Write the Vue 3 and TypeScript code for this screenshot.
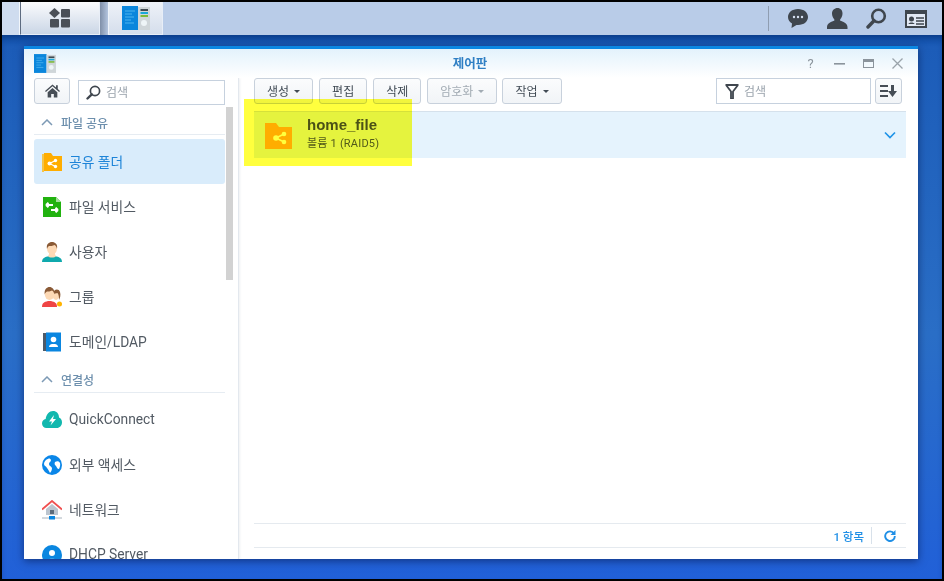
<script setup lang="ts">
interface Item { label: string; icon: string; active?: boolean }
const share: Item[] = [
  { label: '공유 폴더', icon: 'folder', active: true },
  { label: '파일 서비스', icon: 'file' },
  { label: '사용자', icon: 'user' },
  { label: '그룹', icon: 'group' },
  { label: '도메인/LDAP', icon: 'domain' },
]
const conn: Item[] = [
  { label: 'QuickConnect', icon: 'cloud' },
  { label: '외부 액세스', icon: 'globe' },
  { label: '네트워크', icon: 'home' },
  { label: 'DHCP Server', icon: 'dhcp' },
]
const tools = [
  { label: '생성', caret: true },
  { label: '편집' },
  { label: '삭제' },
  { label: '암호화', caret: true, disabled: true },
  { label: '작업', caret: true },
]
</script>

<template>
  <div class="screen">
    <header class="taskbar">
      <div class="tb-first"></div>
      <button class="tb-btn tb-main">
        <svg width="22" height="20" viewBox="0 0 22 20">
          <path d="M5.500 0L11 5 5.500 10 0 5z" fill="#4a4f57" />
          <rect x="12" y="1" width="9" height="8.5" rx="1" fill="#4a4f57" />
          <rect x="1" y="11" width="9" height="8.5" rx="1" fill="#4a4f57" />
          <rect x="12" y="11" width="9" height="8.5" rx="1" fill="#4a4f57" />
        </svg>
      </button>
      <div class="tb-gap"></div>
      <button class="tb-btn tb-app">
        <svg width="28" height="24" viewBox="0 0 28 24">
          <rect x="0" y="0" width="16" height="24" fill="#0a86dc" />
          <path d="M3 5h10M3 8h7M3 11h9M3 14h6M3 17h9" stroke="#4db4ee" stroke-width="1" />
          <rect x="16" y="1" width="12" height="23" fill="#cfd6d9" />
          <rect x="18.500" y="3" width="7.500" height="2" fill="#3f4a52" />
          <rect x="18.500" y="6" width="7.500" height="2" fill="#19a7d8" />
          <rect x="18.500" y="9" width="7.500" height="2" fill="#7dba3a" />
          <circle cx="22" cy="17" r="3" fill="#eef5f7" />
        </svg>
      </button>
      <div class="tb-spacer"></div>
      <div class="tb-sep"></div>
      <div class="tb-icons">
        <svg class="ic-chat" width="22" height="21" viewBox="0 0 22 21">
          <path d="M11 1C5 1 1 4.600 1 9c0 2.800 1.500 5 4 6.500L4.500 20l5-3.100c.5.100 1 .1 1.500.1 6 0 10-3.600 10-8S17 1 11 1z" fill="#3f464e" />
          <circle cx="7" cy="9" r="1.200" fill="#d7e2f2" /><circle cx="11" cy="9" r="1.200" fill="#d7e2f2" /><circle cx="15" cy="9" r="1.200" fill="#d7e2f2" />
        </svg>
        <svg class="ic-user" width="21" height="21" viewBox="0 0 21 21">
          <path d="M10.500 0c3 0 5 2.300 5 5.500 0 2.500-1 4.500-2.300 5.700v1.500c2.500.8 7.300 2.400 7.300 6.300v2H0v-2c0-3.900 4.800-5.500 7.300-6.300v-1.500C6 10 5 8 5 5.500 5 2.300 7.500 0 10.500 0z" fill="#3f464e" />
        </svg>
        <svg class="ic-search" width="21" height="21" viewBox="0 0 21 21">
          <circle cx="12.500" cy="8" r="6.300" fill="none" stroke="#3f464e" stroke-width="2.600" />
          <path d="M8 12.800L2 19" stroke="#3f464e" stroke-width="3.400" stroke-linecap="round" />
        </svg>
        <svg class="ic-card" width="22" height="18" viewBox="0 0 22 18">
          <rect x="1" y="1" width="20" height="16" fill="#e2e9f4" stroke="#3f464e" stroke-width="2" />
          <rect x="1" y="1" width="20" height="3" fill="#3f464e" />
          <circle cx="6.500" cy="9" r="2.500" fill="#3f464e" />
          <path d="M3.500 14c.3-2 5.700-2 6 0z" fill="#3f464e" />
          <path d="M11 8h8M11 11h8M11 14h8" stroke="#3f464e" stroke-width="1.400" />
        </svg>
      </div>
    </header>

    <main class="desktop">
      <section class="window">
        <div class="win-head">
          <svg class="win-icon" width="22" height="19" viewBox="0 0 28 24">
            <rect x="0" y="0" width="16" height="24" fill="#0a86dc" />
            <path d="M3 5h10M3 8h7M3 11h9M3 14h6M3 17h9" stroke="#4db4ee" stroke-width="1" />
            <rect x="16" y="1" width="12" height="23" fill="#cfd6d9" />
            <rect x="18.500" y="3" width="7.500" height="2" fill="#3f4a52" />
            <rect x="18.500" y="6" width="7.500" height="2" fill="#19a7d8" />
            <rect x="18.500" y="9" width="7.500" height="2" fill="#7dba3a" />
            <circle cx="22" cy="17" r="3" fill="#eef5f7" />
          </svg>
          <span class="win-title">제어판</span>
          <div class="win-ctrl">
            <span class="help">?</span>
            <svg width="11" height="11" viewBox="0 0 11 11"><rect y="5" width="11" height="1.600" fill="#8b949c" /></svg>
            <svg width="11" height="11" viewBox="0 0 11 11"><rect x="0.500" y="1.500" width="10" height="8" fill="none" stroke="#8b949c" /><rect x="0.500" y="1" width="10" height="3" fill="#8b949c" /></svg>
            <svg width="11" height="11" viewBox="0 0 11 11"><path d="M.5.500l10 10M10.500.500l-10 10" stroke="#9aa3aa" stroke-width="1.300" /></svg>
          </div>
        </div>

        <div class="win-body">
          <aside class="side">
            <div class="side-top">
              <button class="btn home-btn">
                <svg width="15" height="14" viewBox="0 0 17 15">
                  <path d="M8.500 0L0 7.500l1 1.100 7.500-6.500 7.500 6.500 1-1.100-2.500-2.200V1h-2v2.500z" fill="#474e56" />
                  <path d="M3 9l5.500-4.800L14 9v6h-4v-4H7v4H3z" fill="#474e56" />
                </svg>
              </button>
              <div class="input side-search">
                <svg width="15" height="15" viewBox="0 0 15 15">
                  <circle cx="9" cy="6" r="4.600" fill="none" stroke="#3f464e" stroke-width="1.700" />
                  <path d="M5.800 9.300L1.500 13.500" stroke="#3f464e" stroke-width="2.400" stroke-linecap="round" />
                </svg>
                <span>검색</span>
              </div>
            </div>

            <div class="side-scroll">
              <div class="side-list">
                <template v-for="(group, gi) in [share, conn]" :key="gi">
                  <div class="sec" :class="{ second: gi === 1 }">
                    <svg width="12" height="7" viewBox="0 0 12 7"><path d="M1 6l5-5 5 5" fill="none" stroke="#7d9ab5" stroke-width="1.500" /></svg>
                    <span>{{ gi === 0 ? '파일 공유' : '연결성' }}</span>
                  </div>
                  <div v-for="it in group" :key="it.label" class="item" :class="{ active: it.active }">
                    <svg class="item-ic" width="20" height="20" viewBox="0 0 20 20">
                      <template v-if="it.icon === 'folder'">
                        <path d="M0 2h2v18H0z" fill="#ffb300" opacity=".7" />
                        <path d="M2 1h7l2 3h9v15H2z" fill="#ffad00" />
                        <g stroke="#fff" stroke-width="1.200"><path d="M7.500 11.500l6-3M7.500 11.500l6 3" /></g>
                        <circle cx="7.500" cy="11.500" r="2" fill="#fff" /><circle cx="13.500" cy="8.500" r="1.700" fill="#fff" /><circle cx="13.500" cy="14.500" r="1.700" fill="#fff" />
                      </template>
                      <template v-else-if="it.icon === 'file'">
                        <path d="M1 0h13l5 5v15H1z" fill="#21b20f" />
                        <path d="M14 0l5 5h-5z" fill="#a3e09a" />
                        <path d="M4 8h7M4 8l2.500-2.200M4 8l2.500 2.200M16 13h-7M16 13l-2.500-2.200M16 13l-2.500 2.200" stroke="#fff" stroke-width="2" fill="none" />
                      </template>
                      <template v-else-if="it.icon === 'user'">
                        <path d="M0 20c0-4 3-5 7-6h6c4 1 7 2 7 6z" fill="#0fa9ad" />
                        <path d="M6 14c1 2 7 2 8 0-1-1-1-2-1-3H7c0 1 0 2-1 3z" fill="#fdd9b5" />
                        <ellipse cx="10" cy="6.500" rx="5" ry="6" fill="#fdd9b5" />
                        <path d="M5 7C4 2 7 0 10 0s6 2 5 7c-.5-2.500-1.500-3.500-2.500-4-1.500 1-4.500 1-5.500 1-.8.5-1.700 1.500-2 3z" fill="#8a5a36" />
                      </template>
                      <template v-else-if="it.icon === 'group'">
                        <ellipse cx="14" cy="8" rx="3.500" ry="5" fill="#fdd9b5" />
                        <path d="M11 7c0-5 6-6 7-2 1 3 0 6-1 8 0-3 0-5-1.500-7z" fill="#8a5a36" />
                        <circle cx="17.500" cy="17" r="2.500" fill="#ffb300" />
                        <path d="M0 20c0-4 2-5 6-6h3c4 1 6 2 6 6z" fill="#ef4545" />
                        <ellipse cx="7.500" cy="7" rx="4.800" ry="6" fill="#fdd9b5" />
                        <path d="M2.700 7.500C2 2 5 0 7.500 0s5.500 2 4.800 7.500C12 5 11 4 10 3.500c-1.500 1-4 1-5 1-1 .5-2 1.500-2.300 3z" fill="#8a5a36" />
                      </template>
                      <template v-else-if="it.icon === 'domain'">
                        <rect x="1" y="1" width="4" height="18" fill="#4d5a68" />
                        <rect x="4" y="0.500" width="15" height="19" fill="#0a86e0" />
                        <circle cx="11.500" cy="7.500" r="2.800" fill="#fff" />
                        <path d="M7 15c0-2.500 2.500-3 4.500-3s4.500.5 4.500 3z" fill="#fff" />
                      </template>
                      <template v-else-if="it.icon === 'cloud'">
                        <path d="M4.500 18C2 18 0 16 0 13.500c0-2.200 1.500-4 3.700-4.400C4 4.500 7.500 1 11 1c3.500 0 6 2.500 6 6.500 2 .8 3 2.700 3 5 0 3-2.500 5.500-5 5.500z" fill="#12b8ae" />
                        <path d="M12 5L7 11.500h3L8.500 15.500l5.500-6.500h-3z" fill="#fff" />
                      </template>
                      <template v-else-if="it.icon === 'globe'">
                        <circle cx="10" cy="10" r="10" fill="#0a86e8" />
                        <path d="M4 5c3-2 4-2 5 0 0 2-2 2-2 4s2 2 3 4c0 2-1 4-2 5-1-2-2-4-3-5-1-2-3-2-3-4 0-2 1-3 2-4zM13 7c2-1 4-1 5 1 .5 2 0 4-1 6-2 0-2-2-3-3s-2-2-1-4z" fill="#fff" />
                      </template>
                      <template v-else-if="it.icon === 'home'">
                        <path d="M4 9l6-5 6 5v6H4z" fill="#bcc5cf" />
                        <path d="M0 9.500L10 1l10 8.500" fill="none" stroke="#f05050" stroke-width="1.800" />
                        <rect x="8" y="10" width="4" height="4" fill="#5c6b7a" />
                        <path d="M0 18h20" stroke="#a8b2bc" />
                        <rect x="7" y="16" width="6" height="3.500" fill="#0a86e0" />
                      </template>
                      <template v-else>
                        <circle cx="10" cy="10" r="10" fill="#0a86e0" />
                        <circle cx="10" cy="8" r="3" fill="#fff" />
                        <path d="M4 16c1-3 11-3 12 0v3H4z" fill="#cfe9fb" />
                      </template>
                    </svg>
                    <span class="item-label">{{ it.label }}</span>
                  </div>
                </template>
              </div>
              <div class="scroll-track"><div class="scroll-thumb"></div></div>
            </div>
          </aside>

          <div class="content">
            <div class="toolbar">
              <button v-for="t in tools" :key="t.label" class="btn tool" :class="{ disabled: t.disabled }">
                {{ t.label }}<i v-if="t.caret" class="caret"></i>
              </button>
              <div class="tb-fill"></div>
              <div class="input filter">
                <svg width="14" height="15" viewBox="0 0 14 15"><path d="M.5 1h13M1 1l5 6.500V15h2V7.500L13 1" fill="none" stroke="#3f464e" stroke-width="1.800" /></svg>
                <span>검색</span>
              </div>
              <button class="btn sort">
                <svg width="17" height="12" viewBox="0 0 17 12">
                  <path d="M0 1h8M0 6h8M0 11h8" stroke="#474e56" stroke-width="1.800" />
                  <path d="M11 0h3v6h3l-4.500 6L8 6h3z" fill="#474e56" />
                </svg>
              </button>
            </div>

            <div class="list">
              <div class="row">
                <svg class="row-ic" width="27" height="26" viewBox="0 0 27 26">
                  <path d="M0 0h11l3 4h13v22H0z" fill="#ffad00" />
                  <g stroke="#fff" stroke-width="1.500"><path d="M11 15l8-4M11 15l8 4" /></g>
                  <circle cx="11" cy="15" r="2.800" fill="#fff" /><circle cx="19" cy="11" r="2.300" fill="#fff" /><circle cx="19" cy="19" r="2.300" fill="#fff" />
                </svg>
                <div class="row-text">
                  <div class="row-name">home_file</div>
                  <div class="row-sub">볼륨 1 (RAID5)</div>
                </div>
                <svg class="chev" width="12" height="8" viewBox="0 0 12 8"><path d="M1 1.500l5 5 5-5" fill="none" stroke="#1f93e8" stroke-width="1.700" /></svg>
              </div>
            </div>

            <div class="foot">
              <span class="count">1 항목</span>
              <i class="foot-sep"></i>
              <svg width="12" height="12" viewBox="0 0 12 12">
                <path d="M10 3.500A4.800 4.800 0 1 0 10.800 6" fill="none" stroke="#1f8fe6" stroke-width="1.900" />
                <path d="M11.500 0v5h-5z" fill="#1f8fe6" />
              </svg>
            </div>
          </div>
        </div>

        <div class="marker"></div>
      </section>
    </main>
  </div>
</template>

<style scoped>
* { box-sizing: border-box; }
.screen {
  width: 944px; height: 581px; overflow: hidden; background: #fff;
  border: solid #000; border-width: 2px 2px 2px 2px;
  display: flex; flex-direction: column;
  font-family: Roboto, "Noto Sans CJK KR", sans-serif; color: #525a63; font-size: 13px;
}
button { font: inherit; color: inherit; padding: 0; margin: 0; }
.taskbar { height: 33px; flex: none; display: flex; align-items: stretch; background: #b9cce8; }
.tb-first { width: 18px; background: #cfdcef; border-right: 1px solid #f2f6fb; }
.tb-btn { border: none; border-right: 1px solid #e8eef7; border-bottom: 1px solid #e8eef7; display: flex; align-items: center; justify-content: center; background: linear-gradient(180deg, #fafbfd, #cad6e6); }
.tb-main { width: 80px; border-left: 1px solid #5d6b80; }
.tb-gap { width: 8px; background: linear-gradient(90deg, #7f8fa8, #b3c4de); }
.tb-app { width: 55px; border-left: 1px solid #eef3fa; background: linear-gradient(180deg, #eef2f8, #d5deec); }
.tb-spacer { flex: 1; }
.tb-sep { width: 1px; margin: 4px 0 4px 0; background: #8f9db1; }
.tb-icons { width: 173px; padding: 0 15px 0 18px; display: flex; align-items: center; justify-content: space-between; }

.desktop {
  flex: 1; min-height: 0; padding: 11px 24px 0 22px; overflow: hidden;
  background: linear-gradient(180deg, #0f4ea6 0, #1c5cb8 12px, #2a6ec6 55%, #2160d8 100%);
  box-shadow: inset 0 4px 6px -2px rgba(0, 20, 70, .35);
}
.window {
  position: relative; width: 894px; height: 513px; background: #fff;
  border-top: 3px solid #0b87e3; display: flex; flex-direction: column;
  box-shadow: 0 2px 8px rgba(0, 15, 60, .55);
}
.win-head { height: 29px; flex: none; position: relative; display: flex; align-items: center; justify-content: center; background: linear-gradient(180deg, #e3f2fc, #ffffff); }
.win-icon { position: absolute; left: 10px; top: 5px; }
.win-title { font-size: 12.500px; font-weight: 700; color: #2f7fc4; position: relative; top: -1px; left: -1px; }
.win-ctrl { position: absolute; right: 15px; top: 9px; display: flex; gap: 18px; align-items: center; }
.help { width: 11px; font-size: 13px; line-height: 11px; color: #8b949c; text-align: center; }
.win-body { flex: 1; min-height: 0; display: flex; }

.side { width: 215px; flex: none; border-right: 1px solid #e3e8ee; box-shadow: 1px 0 2px rgba(120,140,160,.12); display: flex; flex-direction: column; overflow: hidden; }
.side-top { height: 29px; flex: none; padding-left: 10px; display: flex; gap: 8px; }
.btn { border: 1px solid #c8d1dc; border-radius: 3px; background: linear-gradient(180deg, #fbfcfd, #f1f4f7); color: #414b55; display: flex; align-items: center; justify-content: center; }
.home-btn { width: 36px; height: 26px; }
.input { border: 1px solid #c6d1de; background: #fff; color: #9aa3ac; display: flex; align-items: center; font-size: 12px; }
.input span { margin-bottom: 2px; }
.side-search { width: 147px; height: 25px; margin-top: 2px; padding-left: 7px; gap: 5px; }
.side-scroll { flex: 1; min-height: 0; display: flex; overflow: hidden; }
.side-list { width: 191px; margin-left: 10px; flex: none; }
.scroll-track { width: 7px; margin-left: 1px; flex: none; }
.scroll-thumb { height: 173px; background: #d2d2d2; }
.sec { height: 28px; display: flex; align-items: center; gap: 8px; padding: 4px 0 0 7px; color: #6d8fad; font-size: 12px; font-weight: 500; border-bottom: 1px solid #e6ecf2; }
.sec.second { height: 29px; padding-top: 3px; }
.item { height: 45px; display: flex; align-items: center; gap: 7px; padding-left: 8px; font-size: 13.800px; color: #525a63; border-radius: 3px; }
.item-label { margin-bottom: 2px; }
.sec + .item { margin-top: 4px; }
.item.active { background: #d9ecfb; color: #1d84d8; }
.item-ic { flex: none; }

.content { flex: 1; min-width: 0; padding: 0 12px 0 15px; display: flex; flex-direction: column; }
.toolbar { height: 33px; flex: none; display: flex; gap: 6px; align-items: flex-start; }
.tool { height: 26px; padding: 0 12px 2px; font-size: 12px; gap: 5px; }
.tool.disabled { color: #a2abb3; margin-right: -1px; }
.caret { width: 0; height: 0; border: solid transparent; border-width: 3px 3px 0; border-top-color: currentColor; margin-top: 3px; }
.tb-fill { flex: 1; }
.filter { width: 155px; height: 26px; padding-left: 8px; gap: 5px; margin-right: -2px; }
.sort { width: 27px; height: 26px; margin-right: 4px; }
.list { flex: 1; min-height: 0; }
.row { height: 47px; display: flex; align-items: center; padding: 0 10px 0 11px; background: #e5f3fd; border-top: 1px solid #d5e1ec; }
.row-ic { margin-right: 15px; flex: none; margin-top: 1px; }
.row-text { flex: 1; margin-top: -2px; }
.row-name { font-family: "Liberation Sans", sans-serif; font-weight: 700; font-size: 15px; line-height: 17px; color: #4b5157; }
.row-sub { font-size: 11px; line-height: 16px; margin-top: 3px; color: #525a63; letter-spacing: .2px; }
.foot { height: 25px; flex: none; margin-bottom: 11px; border: solid #e5eaef; border-width: 1px 0; display: flex; align-items: center; justify-content: flex-end; padding-right: 10px; color: #1f8fe6; font-size: 11.500px; font-weight: 500; }
.foot-sep { width: 1px; height: 17px; background: #d8e1ea; margin: 0 12px 0 7px; }
.marker { position: absolute; left: 220px; top: 50px; width: 168px; height: 67px; background: #ffff3e; mix-blend-mode: multiply; pointer-events: none; }
</style>
